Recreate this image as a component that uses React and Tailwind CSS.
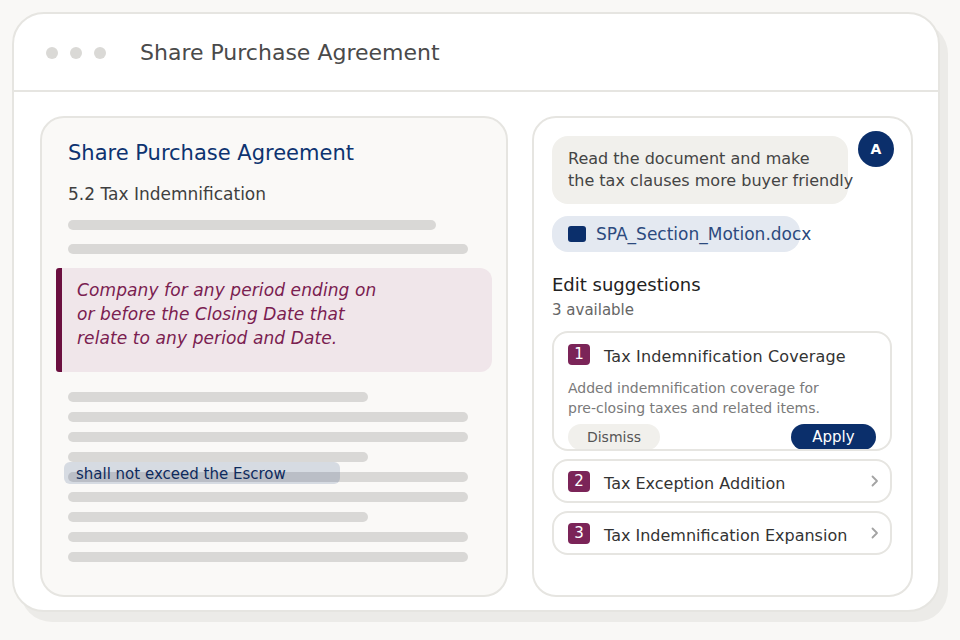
import React from "react";

const font = { fontFamily: '"DejaVu Sans", "Open Sans", sans-serif' };

function Bar({ w }) {
  return <div className={`h-[10px] rounded-full bg-[#d9d8d6] ${w}`} />;
}

function Chevron() {
  return (
    <svg width="10" height="12" viewBox="0 0 10 12" fill="none" className="shrink-0">
      <path d="M2.5 1.5 L7 6 L2.5 10.5" stroke="#a3a3a3" strokeWidth="1.8" strokeLinecap="round" strokeLinejoin="round" />
    </svg>
  );
}

function Badge({ n }) {
  return (
    <div className="w-[22px] h-[21px] rounded-[4px] bg-[#7b2458] text-white text-[15px] leading-[21px] flex items-center justify-center shrink-0">
      {n}
    </div>
  );
}

export default function App() {
  return (
    <div className="w-[960px] h-[640px] bg-[#f9f8f6] pt-3 pl-3 overflow-hidden" style={font}>
      <div className="w-[928px] h-[600px] rounded-[32px] border-2 border-[#e6e5e1] bg-white shadow-[8px_10px_0_#ecebe8] flex flex-col">
        {/* title bar */}
        <div className="h-[78px] border-b-2 border-[#e6e5e1] flex items-center pl-8 shrink-0">
          <div className="flex gap-3 mt-[1px]">
            <div className="w-3 h-3 rounded-full bg-[#dad9d6]" />
            <div className="w-3 h-3 rounded-full bg-[#dad9d6]" />
            <div className="w-3 h-3 rounded-full bg-[#dad9d6]" />
          </div>
          <div className="ml-[34px] mt-[2px] text-[22px] leading-[30px] text-[#4a4a4a] whitespace-nowrap">Share Purchase Agreement</div>
        </div>
        {/* body */}
        <div className="flex gap-6 pt-6 pl-[26px]">
          {/* left doc panel */}
          <div className="w-[468px] h-[481px] rounded-[24px] border-2 border-[#e6e5e1] bg-[#faf9f7] pl-[26px] pt-[21px] relative">
            <div className="text-[21px] leading-[28px] text-[#0d3370] whitespace-nowrap">Share Purchase Agreement</div>
            <div className="mt-[15px] text-[17px] leading-[24px] text-[#3f3f3f]">5.2 Tax Indemnification</div>
            <div className="mt-[14px] flex flex-col gap-[14px]">
              <Bar w="w-[368px]" />
              <Bar w="w-[400px]" />
            </div>
            <div className="mt-[14px] -ml-3 w-[436px] h-[104px] bg-[#f0e6ea] rounded-r-[12px] border-l-[6px] border-[#6b0f3f] rounded-l-[3px] pl-[15px] pt-[10px]">
              <p className="text-[17px] leading-[24px] italic text-[#7a2050] whitespace-nowrap tracking-[0.1px]">
                Company for any period ending on
                <br />
                or before the Closing Date that
                <br />
                relate to any period and Date.
              </p>
            </div>
            <div className="mt-5 flex flex-col gap-[10px]">
              <Bar w="w-[300px]" />
              <Bar w="w-[400px]" />
              <Bar w="w-[400px]" />
              <Bar w="w-[300px]" />
              <Bar w="w-[400px]" />
              <Bar w="w-[400px]" />
              <Bar w="w-[300px]" />
              <Bar w="w-[400px]" />
              <Bar w="w-[400px]" />
            </div>
            <div className="absolute left-[22px] top-[344px] w-[276px] h-[22px] rounded-[6px] bg-[#0b2f6b]/15 pl-3 pt-[1px] text-[15px] leading-[22px] text-[#0d2a5c] whitespace-nowrap">
              shall not exceed the Escrow
            </div>
          </div>
          {/* right assistant panel */}
          <div className="w-[381px] h-[481px] rounded-[24px] border-2 border-[#e6e5e1] bg-white pl-[18px] pt-[18px]">
            <div className="flex items-start">
              <div className="w-[296px] h-[68px] rounded-[16px] bg-[#f1f0ec] pl-4 pt-[12px] text-[16px] leading-[22px] text-[#444] whitespace-nowrap">
                Read the document and make
                <br />
                the tax clauses more buyer friendly
              </div>
              <div className="ml-[10px] -mt-[5px] w-9 h-9 rounded-full bg-[#0b2f6b] text-white text-[14px] font-semibold flex items-center justify-center shrink-0">
                A
              </div>
            </div>
            <div className="mt-3 w-[248px] h-9 rounded-[16px] bg-[#e4e9f1] flex items-center pl-4 whitespace-nowrap">
              <div className="w-[18px] h-4 rounded-[3px] bg-[#0b2f6b] shrink-0" />
              <span className="ml-[10px] text-[17px] text-[#2c4a7e] pt-[1px]">SPA_Section_Motion.docx</span>
            </div>
            <div className="mt-[21px] text-[18px] leading-[24px] text-[#222]">Edit suggestions</div>
            <div className="mt-[3px] text-[15px] leading-[20px] text-[#666]">3 available</div>
            <div className="mt-[11px] flex flex-col gap-2 w-[340px]">
              <div className="h-[120px] rounded-[16px] border-2 border-[#e6e5e1] pl-[14px] pr-[14px] pt-[10px] overflow-hidden">
                <div className="flex items-center gap-[14px] h-[22px]">
                  <Badge n="1" />
                  <span className="text-[16px] leading-[22px] text-[#333] whitespace-nowrap pt-[5px] tracking-[0.15px]">Tax Indemnification Coverage</span>
                </div>
                <div className="mt-[13px] text-[14px] leading-[20px] text-[#7a7a7a] whitespace-nowrap">
                  Added indemnification coverage for
                  <br />
                  pre-closing taxes and related items.
                </div>
                <div className="mt-[6px] flex justify-between">
                  <div className="w-[92px] h-[26px] rounded-full bg-[#f1f0ec] text-[14px] text-[#555] flex items-center justify-center">Dismiss</div>
                  <div className="w-[85px] h-[26px] rounded-full bg-[#0b2f6b] text-[15px] text-white flex items-center justify-center">Apply</div>
                </div>
              </div>
              <div className="h-[44px] rounded-[16px] border-2 border-[#e6e5e1] pl-[14px] pr-[10px] flex items-center">
                <Badge n="2" />
                <span className="ml-[14px] text-[16px] leading-[22px] pt-[5px] text-[#333] flex-1 whitespace-nowrap">Tax Exception Addition</span>
                <Chevron />
              </div>
              <div className="h-[44px] rounded-[16px] border-2 border-[#e6e5e1] pl-[14px] pr-[10px] flex items-center">
                <Badge n="3" />
                <span className="ml-[14px] text-[16px] leading-[22px] pt-[5px] text-[#333] flex-1 whitespace-nowrap">Tax Indemnification Expansion</span>
                <Chevron />
              </div>
            </div>
          </div>
        </div>
      </div>
    </div>
  );
}
